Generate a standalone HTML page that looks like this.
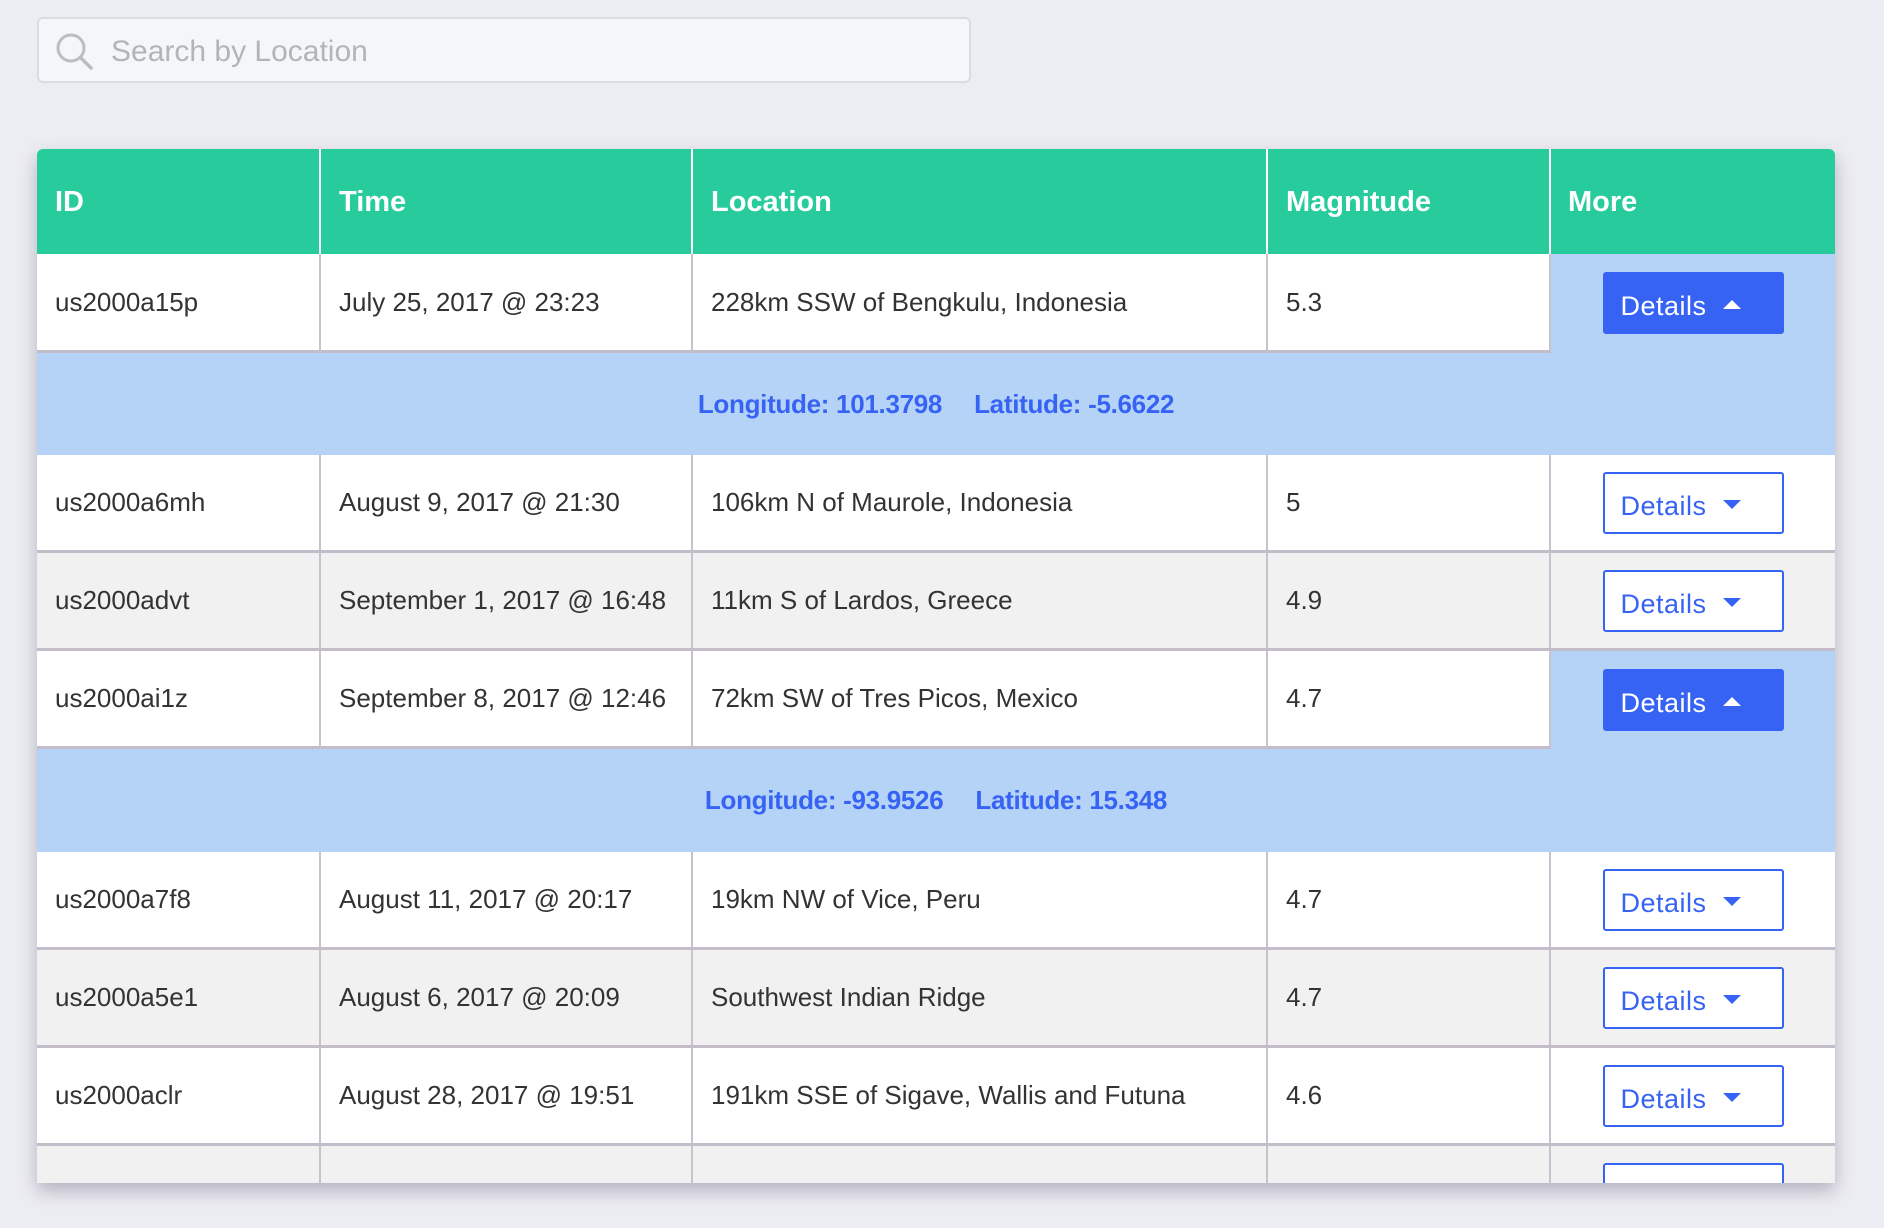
<!DOCTYPE html>
<html><head><meta charset="utf-8"><style>
*{box-sizing:border-box;margin:0;padding:0}
body{width:1884px;height:1228px;background:#ecedf2;font-family:"Liberation Sans",sans-serif;overflow:hidden;position:relative}
.search{position:absolute;left:37px;top:17px;width:934px;height:66px;border:2px solid #dcdce0;border-radius:6px;background:#f4f7f9}
.search svg{position:absolute;left:15px;top:12px}
.search span{position:absolute;left:72px;top:16px;font-size:30px;color:#b4b4b8}
.tbl{position:absolute;left:37px;top:149px;width:1798px;height:1034px;overflow:hidden;border-radius:6px 6px 0 0;box-shadow:0 8px 18px rgba(80,70,100,.35);background:#fff}
.row{display:flex;position:relative}
.c{height:100%;border-right:2px solid #c8c2cf;padding-left:18px;display:flex;align-items:center;font-size:26px;color:#333}
.c:last-child{border-right:none;justify-content:center;padding-left:0}
.w1{width:284px}.w2{width:372px}.w3{width:575px}.w4{width:283px}.w5{width:284px}
.hd{height:105px;background:#28cc9c}
.hd .c{color:#fff;font-size:29px;font-weight:600;border-right-color:#fff;padding-top:2px}
.hd .c:last-child{justify-content:flex-start;padding-left:17px}
.r{height:98px;border-bottom:3px solid #c3bcc9}
.g{background:#f1f1f2}
.btn{width:181px;height:62px;border:2px solid #3763f4;border-radius:3px;color:#3763f4;font-size:27px;display:flex;align-items:center;padding-left:16px;padding-top:7px;background:#fff;letter-spacing:.5px}
.btn i{display:inline-block;width:0;height:0;border-left:9px solid transparent;border-right:9px solid transparent;border-top:9px solid currentColor;margin-left:16px;margin-top:-4px}
.open .c:last-child{background:#b5d3f7;align-items:flex-start;padding-top:18px}
.open{border-bottom:none}
.open .c:not(:last-child){border-bottom:3px solid #c3bcc9}
.open .btn{background:#3763f4;color:#fff}
.open .btn i{border-top:none;border-bottom:9px solid #fff}
.det{height:102px;background:#b5d3f7;display:flex;justify-content:center;align-items:center;color:#3763f4;font-size:26px;font-weight:600;letter-spacing:-.3px}
.det span{margin:0 16px}
</style></head><body>
<div class="search"><svg width="42" height="42" viewBox="0 0 42 42"><circle cx="17" cy="17" r="13" fill="none" stroke="#bdbdc0" stroke-width="3"/><line x1="26.5" y1="26.5" x2="37" y2="37" stroke="#bdbdc0" stroke-width="3.5" stroke-linecap="round"/></svg><span>Search by Location</span></div>
<div class="tbl">
<div class="row hd"><div class="c w1">ID</div><div class="c w2">Time</div><div class="c w3">Location</div><div class="c w4">Magnitude</div><div class="c w5">More</div></div>
<div class="row r open" style="height:99px"><div class="c w1">us2000a15p</div><div class="c w2">July 25, 2017 @ 23:23</div><div class="c w3">228km SSW of Bengkulu, Indonesia</div><div class="c w4">5.3</div><div class="c w5"><div class="btn">Details<i></i></div></div></div>
<div class="det"><span>Longitude: 101.3798</span><span>Latitude: -5.6622</span></div>
<div class="row r"><div class="c w1">us2000a6mh</div><div class="c w2">August 9, 2017 @ 21:30</div><div class="c w3">106km N of Maurole, Indonesia</div><div class="c w4">5</div><div class="c w5"><div class="btn">Details<i></i></div></div></div>
<div class="row r g"><div class="c w1">us2000advt</div><div class="c w2">September 1, 2017 @ 16:48</div><div class="c w3">11km S of Lardos, Greece</div><div class="c w4">4.9</div><div class="c w5"><div class="btn">Details<i></i></div></div></div>
<div class="row r open"><div class="c w1">us2000ai1z</div><div class="c w2">September 8, 2017 @ 12:46</div><div class="c w3">72km SW of Tres Picos, Mexico</div><div class="c w4">4.7</div><div class="c w5"><div class="btn">Details<i></i></div></div></div>
<div class="det" style="height:103px"><span>Longitude: -93.9526</span><span>Latitude: 15.348</span></div>
<div class="row r"><div class="c w1">us2000a7f8</div><div class="c w2">August 11, 2017 @ 20:17</div><div class="c w3">19km NW of Vice, Peru</div><div class="c w4">4.7</div><div class="c w5"><div class="btn">Details<i></i></div></div></div>
<div class="row r g"><div class="c w1">us2000a5e1</div><div class="c w2">August 6, 2017 @ 20:09</div><div class="c w3">Southwest Indian Ridge</div><div class="c w4">4.7</div><div class="c w5"><div class="btn">Details<i></i></div></div></div>
<div class="row r"><div class="c w1">us2000aclr</div><div class="c w2">August 28, 2017 @ 19:51</div><div class="c w3">191km SSE of Sigave, Wallis and Futuna</div><div class="c w4">4.6</div><div class="c w5"><div class="btn">Details<i></i></div></div></div>
<div class="row r g"><div class="c w1">us2000a9ev</div><div class="c w2">August 31, 2017 @ 20:27</div><div class="c w3">47km SE of Ilamatlan, Mexico</div><div class="c w4">4.6</div><div class="c w5"><div class="btn">Details<i></i></div></div></div>
</div>
</body></html>
